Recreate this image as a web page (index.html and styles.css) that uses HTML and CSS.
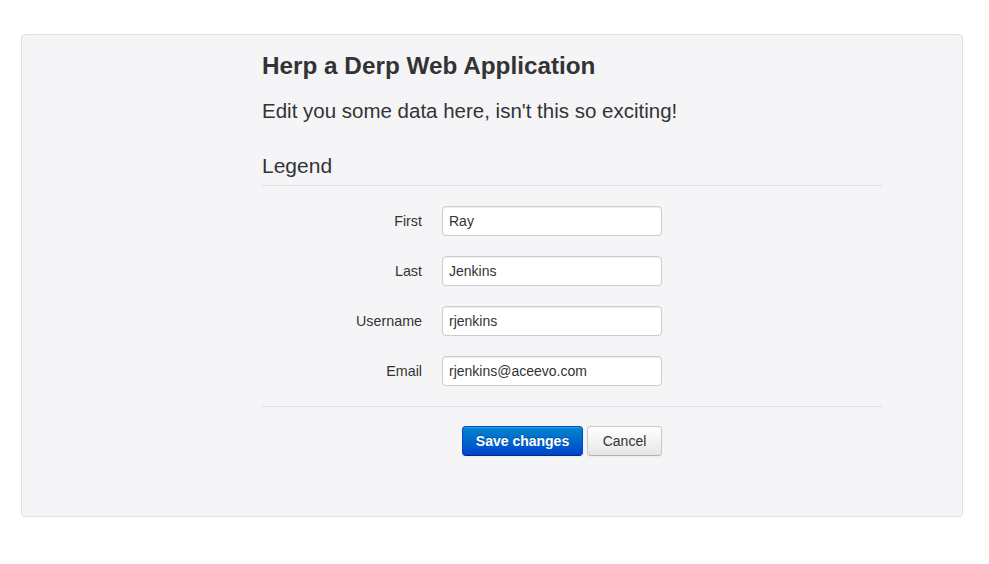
FILE: index.html
```html
<!DOCTYPE html>
<html>
<head>
<meta charset="utf-8">
<link rel="stylesheet" href="styles.css">
</head>
<body>
<div class="page">
  <div class="well">
    <div class="content">
      <h1 class="title">Herp a Derp Web Application</h1>
      <p class="lead">Edit you some data here, isn't this so exciting!</p>
      <form class="form">
        <div class="legend">Legend</div>
        <div class="fields">
          <div class="row"><label class="label">First</label><input class="input" type="text" value="Ray"></div>
          <div class="row"><label class="label">Last</label><input class="input" type="text" value="Jenkins"></div>
          <div class="row"><label class="label">Username</label><input class="input" type="text" value="rjenkins"></div>
          <div class="row"><label class="label">Email</label><input class="input" type="text" value="rjenkins@aceevo.com"></div>
        </div>
        <div class="actions">
          <button type="button" class="btn btn-primary">Save changes</button>
          <button type="button" class="btn">Cancel</button>
        </div>
      </form>
    </div>
  </div>
</div>
</body>
</html>
```
FILE: styles.css
```css
html, body {
  margin: 0;
  padding: 0;
  background: #ffffff;
  font-family: "Liberation Sans", Arial, sans-serif;
  color: #333333;
}
.page {
  padding: 34px 0 0 21px;
}
.well {
  width: 940px;
  height: 481px;
  box-sizing: content-box;
  background: #f5f5f7;
  border: 1px solid #e1e1e6;
  border-radius: 4px;
}
.content {
  margin-left: 240px;
  width: 620px;
  padding-top: 16px;
}
.title {
  margin: 0;
  font-size: 24.3px;
  line-height: 30px;
  font-weight: bold;
  color: #333;
}
.lead {
  margin: 15px 0 0 0;
  font-size: 20.5px;
  line-height: 30px;
  font-weight: normal;
  color: #333;
}
.form {
  margin: 0;
}
.legend {
  margin-top: 25px;
  font-size: 21px;
  line-height: 30px;
  padding-bottom: 4px;
  border-bottom: 1px solid #e0e0e3;
  color: #333;
}
.fields {
  padding-top: 20px;
  display: flex;
  flex-direction: column;
  gap: 20px;
}
.row {
  display: flex;
  align-items: center;
}
.label {
  width: 160px;
  text-align: right;
  font-size: 14.3px;
  padding-right: 20px;
  color: #333;
}
.input {
  width: 220px;
  height: 30px;
  box-sizing: border-box;
  border: 1px solid #cccccc;
  border-radius: 4px;
  background: #fff;
  padding: 4px 6px;
  font-family: "Liberation Sans", Arial, sans-serif;
  font-size: 14px;
  color: #333;
  box-shadow: inset 0 1px 1px rgba(0,0,0,0.075);
}
.actions {
  margin-top: 20px;
  border-top: 1px solid #e0e0e3;
  padding: 19px 0 0 200px;
  display: flex;
  gap: 4px;
}
.btn {
  height: 30px;
  box-sizing: border-box;
  padding: 4px 12px;
  font-family: "Liberation Sans", Arial, sans-serif;
  font-size: 14px;
  color: #333;
  border: 1px solid #c8c8c8;
  border-bottom-color: #b3b3b3;
  border-radius: 4px;
  background: linear-gradient(#ffffff, #e6e6e6);
  box-shadow: inset 0 1px 0 rgba(255,255,255,0.2), 0 1px 2px rgba(0,0,0,0.05);
}
.btn-primary {
  width: 121px;
  color: #fff;
  font-weight: bold;
  border-color: #0044cc #0044cc #002a80;
  background: linear-gradient(#0088cc, #0044cc);
  text-shadow: 0 -1px 0 rgba(0,0,0,0.25);
}
.btn + .btn {
  width: 75px;
}
```
